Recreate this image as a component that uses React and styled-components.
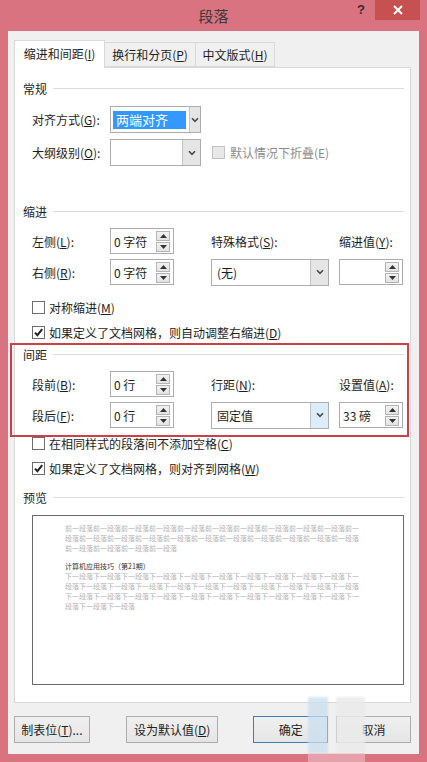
import React from "react";
import styled, { createGlobalStyle } from "styled-components";

const font = `"Noto Sans CJK SC", "Noto Sans", "Liberation Sans", sans-serif`;

const GlobalStyle = createGlobalStyle`
  html, body {
    margin: 0;
    padding: 0;
    background: #d8737f;
  }
  body {
    font-family: ${font};
    font-size: 12px;
    color: #1e1e1e;
  }
`;

const prevText = "前一段落".repeat(25);
const nextText = "下一段落".repeat(34);

function Chevron() {
  return (
    <svg width="8" height="6" viewBox="0 0 8 6">
      <path d="M1 1.2 L4 4.4 L7 1.2" fill="none" stroke="#4a4a4a" strokeWidth="1.6" />
    </svg>
  );
}

function Check() {
  return (
    <svg width="11" height="11" viewBox="0 0 11 11">
      <path d="M2 5.6 L4.4 8.2 L9.2 2.2" fill="none" stroke="#222" strokeWidth="2" />
    </svg>
  );
}

function Arrow({ up }) {
  return (
    <svg width="7" height="4" viewBox="0 0 7 4">
      <path d={up ? "M0 4 L3.5 0 L7 4 Z" : "M0 0 L3.5 4 L7 0 Z"} fill="#333" />
    </svg>
  );
}

function Combo({ width, children, selected, focused }) {
  return (
    <ComboBox $width={width}>
      <ComboText>{selected ? <Selection>{children}</Selection> : children}</ComboText>
      <DropButton $focused={focused}>
        <Chevron />
      </DropButton>
    </ComboBox>
  );
}

function Spin({ value }) {
  return (
    <SpinBox>
      <SpinText>{value}</SpinText>
      <SpinButtons>
        <SpinButton>
          <Arrow up />
        </SpinButton>
        <SpinButton>
          <Arrow />
        </SpinButton>
      </SpinButtons>
    </SpinBox>
  );
}

function CheckRow({ checked, children }) {
  return (
    <CheckLine>
      <CheckBox>{checked && <Check />}</CheckBox>
      <span>{children}</span>
    </CheckLine>
  );
}

export default function App() {
  return (
    <Window>
      <GlobalStyle />
      <TitleBar>
        <Title>段落</Title>
        <HelpButton>?</HelpButton>
        <CloseButton>
          <svg width="10" height="10" viewBox="0 0 10 10">
            <path d="M1 1 L9 9 M9 1 L1 9" stroke="#fff" strokeWidth="2" />
          </svg>
        </CloseButton>
      </TitleBar>

      <Client>
        <TabStrip>
          <Tab $active $width={91}>
            缩进和间距(<u>I</u>)
          </Tab>
          <Tab $width={92}>
            换行和分页(<u>P</u>)
          </Tab>
          <Tab $width={80}>
            中文版式(<u>H</u>)
          </Tab>
        </TabStrip>

        <Panel>
          <Legend>常规</Legend>
          <Stack $top={10} $gap={6}>
            <Line>
              <Label>
                对齐方式(<u>G</u>):
              </Label>
              <Combo width={91} selected>
                两端对齐
              </Combo>
            </Line>
            <Line>
              <Label>
                大纲级别(<u>O</u>):
              </Label>
              <Combo width={91} />
              <Disabled>
                <DisabledBox />
                默认情况下折叠(E)
              </Disabled>
            </Line>
          </Stack>

          <Legend $top={37}>缩进</Legend>
          <Grid $top={9}>
            <Label>
              左侧(<u>L</u>):
            </Label>
            <Spin value="0 字符" />
            <Label>
              特殊格式(<u>S</u>):
            </Label>
            <Label>
              缩进值(<u>Y</u>):
            </Label>
            <Label>
              右侧(<u>R</u>):
            </Label>
            <Spin value="0 字符" />
            <Combo width={118}>(无)</Combo>
            <Spin value="" />
          </Grid>

          <Stack $top={12} $gap={5}>
            <CheckRow>
              对称缩进(<u>M</u>)
            </CheckRow>
            <CheckRow checked>
              如果定义了文档网格，则自动调整右缩进(<u>D</u>)
            </CheckRow>
          </Stack>

          <Marked>
            <Legend $top={4}>间距</Legend>
            <Grid $top={9}>
              <Label>
                段前(<u>B</u>):
              </Label>
              <Spin value="0 行" />
              <Label>
                行距(<u>N</u>):
              </Label>
              <Label>
                设置值(<u>A</u>):
              </Label>
              <Label>
                段后(<u>F</u>):
              </Label>
              <Spin value="0 行" />
              <Combo width={118} focused>
                固定值
              </Combo>
              <Spin value="33 磅" />
            </Grid>
          </Marked>

          <Stack $top={5} $gap={5}>
            <CheckRow>
              在相同样式的段落间不添加空格(<u>C</u>)
            </CheckRow>
            <CheckRow checked>
              如果定义了文档网格，则对齐到网格(<u>W</u>)
            </CheckRow>
          </Stack>

          <Legend $top={11}>预览</Legend>
          <Preview>
            <PreviewText>{prevText}</PreviewText>
            <PreviewHeading>计算机应用技巧（第21期）</PreviewHeading>
            <PreviewText>{nextText}</PreviewText>
          </Preview>
        </Panel>

        <ButtonRow>
          <Button $width={76}>
            制表位(<u>T</u>)...
          </Button>
          <Button $width={93} $left={36}>
            设为默认值(<u>D</u>)
          </Button>
          <Button $width={75} $left={35} $primary>
            确定
          </Button>
          <Button $width={75} $left={8}>
            取消
          </Button>
        </ButtonRow>
      </Client>

      <Stamp>
        <StampBlock $x={0} $w={20} $c="rgba(200, 222, 238, 0.75)" />
        <StampBlock $x={28} $w={29} $c="rgba(234, 234, 234, 0.85)" />
        <StampFoot />
      </Stamp>
    </Window>
  );
}

const Window = styled.div`
  position: relative;
  width: 427px;
  height: 762px;
  background: #d8737f;
  overflow: hidden;
`;

const TitleBar = styled.div`
  position: relative;
  height: 31px;
  display: flex;
  align-items: center;
  justify-content: center;
`;

const Title = styled.div`
  font-size: 15px;
  color: #3a3a3a;
  margin-top: -1px;
`;

const HelpButton = styled.div`
  position: absolute;
  left: 357px;
  top: 2px;
  font-family: "Liberation Sans", sans-serif;
  font-weight: bold;
  font-size: 13px;
  color: #3a2a30;
`;

const CloseButton = styled.div`
  position: absolute;
  left: 375px;
  top: 0;
  width: 45px;
  height: 20px;
  background: #c75050;
  display: flex;
  align-items: center;
  justify-content: center;
`;

const Client = styled.div`
  height: 723px;
  margin: 0 8px;
  box-sizing: border-box;
  padding: 9px 8px 0 6px;
  background: #f0f0f0;
`;

const TabStrip = styled.div`
  display: flex;
  align-items: flex-end;
  height: 27px;
  position: relative;
  z-index: 1;
`;

const Tab = styled.div`
  box-sizing: border-box;
  width: ${(p) => p.$width}px;
  height: ${(p) => (p.$active ? 28 : 25)}px;
  margin-bottom: ${(p) => (p.$active ? -1 : 0)}px;
  margin-left: ${(p) => (p.$active ? 0 : -1)}px;
  border: 1px solid #d9d9d9;
  border-bottom: ${(p) => (p.$active ? "none" : "1px solid #d9d9d9")};
  background: ${(p) => (p.$active ? "#fff" : "#f0f0f0")};
  display: flex;
  align-items: center;
  justify-content: center;
  padding-bottom: ${(p) => (p.$active ? 2 : 0)}px;
  font-size: 12px;
  white-space: nowrap;
`;

const Panel = styled.div`
  box-sizing: border-box;
  height: 636px;
  border: 1px solid #d9d9d9;
  background: #fff;
  padding: 12px 6px 0 8px;
  display: flex;
  flex-direction: column;
`;

const Legend = styled.div`
  display: flex;
  align-items: center;
  gap: 6px;
  height: 16px;
  margin-top: ${(p) => p.$top || 0}px;
  font-size: 12px;
  white-space: nowrap;

  &::after {
    content: "";
    flex: 1;
    height: 1px;
    background: #dcdcdc;
  }
`;

const Stack = styled.div`
  display: flex;
  flex-direction: column;
  gap: ${(p) => p.$gap}px;
  margin-top: ${(p) => p.$top}px;
  padding-left: 9px;
`;

const Line = styled.div`
  display: flex;
  align-items: center;
  height: 27px;
`;

const Label = styled.div`
  width: 78px;
  flex-shrink: 0;
  white-space: nowrap;
  font-size: 12px;
`;

const Grid = styled.div`
  display: grid;
  grid-template-columns: 78px 101px 128px 64px;
  grid-template-rows: 26px 26px;
  row-gap: 5px;
  align-items: center;
  margin-top: ${(p) => p.$top}px;
  padding-left: 9px;
`;

const ComboBox = styled.div`
  box-sizing: border-box;
  width: ${(p) => p.$width}px;
  height: 27px;
  border: 1px solid #acacac;
  background: #fff;
  display: flex;
`;

const ComboText = styled.div`
  flex: 1;
  display: flex;
  align-items: center;
  padding: 3px;
  padding-left: 5px;
  font-size: 12px;
  white-space: nowrap;
`;

const Selection = styled.span`
  display: flex;
  align-items: center;
  height: 18px;
  width: 70px;
  margin-left: -3px;
  padding-left: 3px;
  background: #3399ff;
  color: #fff;
  font-size: 13px;
`;

const DropButton = styled.div`
  width: 17px;
  border-left: 1px solid #c4c4c4;
  background: ${(p) => (p.$focused ? "#dcecfc" : "#e5e5e5")};
  display: flex;
  align-items: center;
  justify-content: center;
`;

const SpinBox = styled.div`
  box-sizing: border-box;
  width: 64px;
  height: 26px;
  border: 1px solid #abadb3;
  background: #fff;
  display: flex;
  align-items: center;
  padding: 0 3px 0 3px;
`;

const SpinText = styled.div`
  flex: 1;
  font-size: 12px;
  white-space: nowrap;
`;

const SpinButtons = styled.div`
  display: flex;
  flex-direction: column;
  gap: 1px;
`;

const SpinButton = styled.div`
  box-sizing: border-box;
  width: 14px;
  height: 10px;
  border: 1px solid #b5b5b5;
  background: linear-gradient(#f2f2f2, #e3e3e3);
  display: flex;
  align-items: center;
  justify-content: center;
`;

const Disabled = styled.div`
  display: flex;
  align-items: center;
  gap: 5px;
  margin-left: 11px;
  color: #8c8c8c;
  font-size: 12px;
  white-space: nowrap;
`;

const DisabledBox = styled.div`
  box-sizing: border-box;
  width: 13px;
  height: 13px;
  border: 1px solid #c2c2c2;
  background: #e8e8e8;
`;

const CheckLine = styled.div`
  display: flex;
  align-items: center;
  gap: 4px;
  height: 20px;
  font-size: 12px;
  white-space: nowrap;
`;

const CheckBox = styled.div`
  box-sizing: border-box;
  width: 13px;
  height: 13px;
  border: 1px solid #6e6e6e;
  background: #fff;
  display: flex;
  align-items: center;
  justify-content: center;
`;

/* red frame drawn around the spacing group */
const Marked = styled.div`
  position: relative;

  &::after {
    content: "";
    position: absolute;
    left: -13px;
    right: -5px;
    top: 1px;
    bottom: -9px;
    border: 2px solid #c9414b;
    pointer-events: none;
  }
`;

const Preview = styled.div`
  box-sizing: border-box;
  height: 170px;
  margin: 10px 0 0 9px;
  border: 1px solid #6a6a6a;
  padding: 7px 0 0 32px;
  display: flex;
  flex-direction: column;
`;

const PreviewText = styled.div`
  width: 294px;
  font-size: 7px;
  line-height: 10px;
  color: #b4b4b4;
  word-break: break-all;
`;

const PreviewHeading = styled.div`
  margin: 8px 0 0;
  font-size: 7px;
  line-height: 10px;
  color: #333;
`;

const ButtonRow = styled.div`
  display: flex;
  margin-top: 13px;
`;

const Button = styled.div`
  box-sizing: border-box;
  width: ${(p) => p.$width}px;
  height: 27px;
  margin-left: ${(p) => p.$left || 0}px;
  border: 1px solid ${(p) => (p.$primary ? "#3c7fb1" : "#acacac")};
  background: linear-gradient(#f0f0f0, #e5e5e5);
  display: flex;
  align-items: center;
  justify-content: center;
  font-size: 12px;
  white-space: nowrap;
`;

const Stamp = styled.div`
  position: absolute;
  left: 308px;
  top: 697px;
  width: 57px;
  height: 65px;
`;

const StampBlock = styled.div`
  position: absolute;
  left: ${(p) => p.$x}px;
  top: 0;
  width: ${(p) => p.$w}px;
  height: 56px;
  background: ${(p) => p.$c};
  filter: blur(1px);
`;

const StampFoot = styled.div`
  position: absolute;
  left: 0;
  right: 0;
  bottom: 0;
  height: 9px;
  background: rgba(240, 190, 196, 0.6);
`;
